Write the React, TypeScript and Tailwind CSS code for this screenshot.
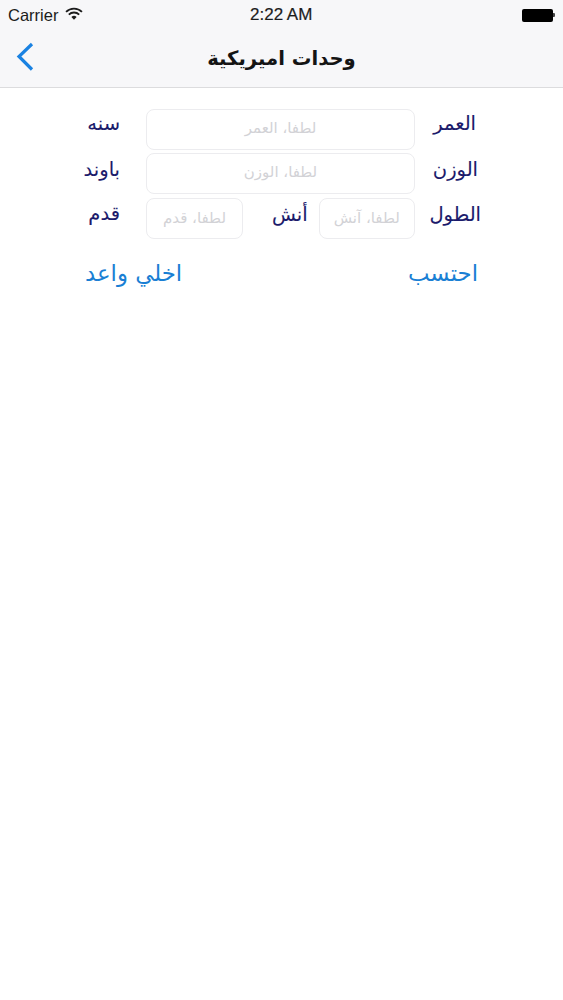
import React from "react";

const ar = "font-['DejaVu_Sans',sans-serif]";

function Field({ ph, className }: { ph: string; className: string }) {
  return (
    <input
      dir="rtl"
      readOnly
      placeholder={ph}
      className={`${ar} h-[41px] rounded-[8px] border border-[#ececef] bg-white text-center text-[15px] outline-none placeholder:text-[#d2d2d6] ${className}`}
    />
  );
}

function Label({ children, className }: { children: string; className: string }) {
  return (
    <span dir="rtl" className={`${ar} whitespace-nowrap text-[19.5px] leading-[24px] text-[#1b1a6b] [-webkit-text-stroke:0.1px_#1b1a6b] ${className}`}>
      {children}
    </span>
  );
}

export default function App() {
  return (
    <div className="flex min-h-[1000px] w-[563px] flex-col bg-white font-['Liberation_Sans',sans-serif]">
      <header className="flex h-[88px] flex-col border-b border-[#dcdcde] bg-[#f7f7f9]">
        <div className="relative flex h-[29px] items-center justify-between pl-[8px] pr-[8px] pt-[1px] text-[16.5px] text-[#1c1c1c]">
          <div className="flex items-center gap-[7px]">
            <span>Carrier</span>
            <svg width="18" height="14" viewBox="0 0 17 13" className="mb-[3px]">
              <path d="M1 4.6 A10.5 10.5 0 0 1 16 4.6" fill="none" stroke="#1c1c1c" strokeWidth="1.7" />
              <path d="M3.6 7.1 A7 7 0 0 1 13.4 7.1" fill="none" stroke="#1c1c1c" strokeWidth="1.7" />
              <path d="M6 9.4 A3.5 3.5 0 0 1 11 9.4 L8.5 12 Z" fill="#1c1c1c" />
            </svg>
          </div>
          <span className="absolute left-[250px] top-[4px] text-[17px] font-normal leading-[22px] [-webkit-text-stroke:0.2px_#1c1c1c]">2:22 AM</span>
          <div className="flex items-center">
            <div className="h-[13px] w-[31px] rounded-[2px] bg-black" />
            <div className="h-[4px] w-[2px] rounded-r-[1px] bg-[#444]" />
          </div>
        </div>
        <div className="relative flex flex-1 items-center justify-center">
          <svg width="20" height="30" viewBox="0 0 20 30" className="absolute left-[15px] top-[13px]">
            <path d="M17 2 L4 14.5 L17 27.5" fill="none" stroke="#1a82e2" strokeWidth="3.2" />
          </svg>
          <h1 dir="rtl" className={`${ar} pt-[1px] text-[19.6px] font-bold leading-[28px] text-[#141414]`}>
            وحدات اميريكية
          </h1>
        </div>
      </header>

      <main className="flex flex-col gap-[3px] pl-[80px] pr-[82px] pt-[21px]">
        <div className="flex items-center">
          <Label className="w-[40px] pb-[12px] text-right">سنه</Label>
          <Field ph="لطفا، العمر" className="ml-[26px] w-[269px] pb-[3px]" />
          <Label className="ml-auto mr-[5px] pb-[11px]">العمر</Label>
        </div>
        <div className="flex items-center">
          <Label className="w-[40px] pb-[7px] text-right">باوند</Label>
          <Field ph="لطفا، الوزن" className="ml-[26px] w-[269px] pb-[3px]" />
          <Label className="ml-auto mr-[3px] pb-[8px]">الوزن</Label>
        </div>
        <div className="mt-[1px] flex items-center">
          <Label className="w-[40px] pb-[10px] text-right">قدم</Label>
          <Field ph="لطفا، قدم" className="ml-[26px] w-[97px] pb-[1px]" />
          <Label className="ml-[29px] pb-[8px]">أنش</Label>
          <Field ph="لطفا، آنش" className="ml-[11px] w-[96px] pb-[1px]" />
          <Label className="ml-auto pb-[8px]">الطول</Label>
        </div>
        <div className="mt-[17px] flex items-center justify-between pl-[5px] pr-[3px]">
          <button dir="rtl" className={`${ar} text-[22.8px] leading-[28px] text-[#1a7fd4]`}>اخلي واعد</button>
          <button dir="rtl" className={`${ar} text-[22.8px] leading-[28px] text-[#1a7fd4]`}>احتسب</button>
        </div>
      </main>
    </div>
  );
}
